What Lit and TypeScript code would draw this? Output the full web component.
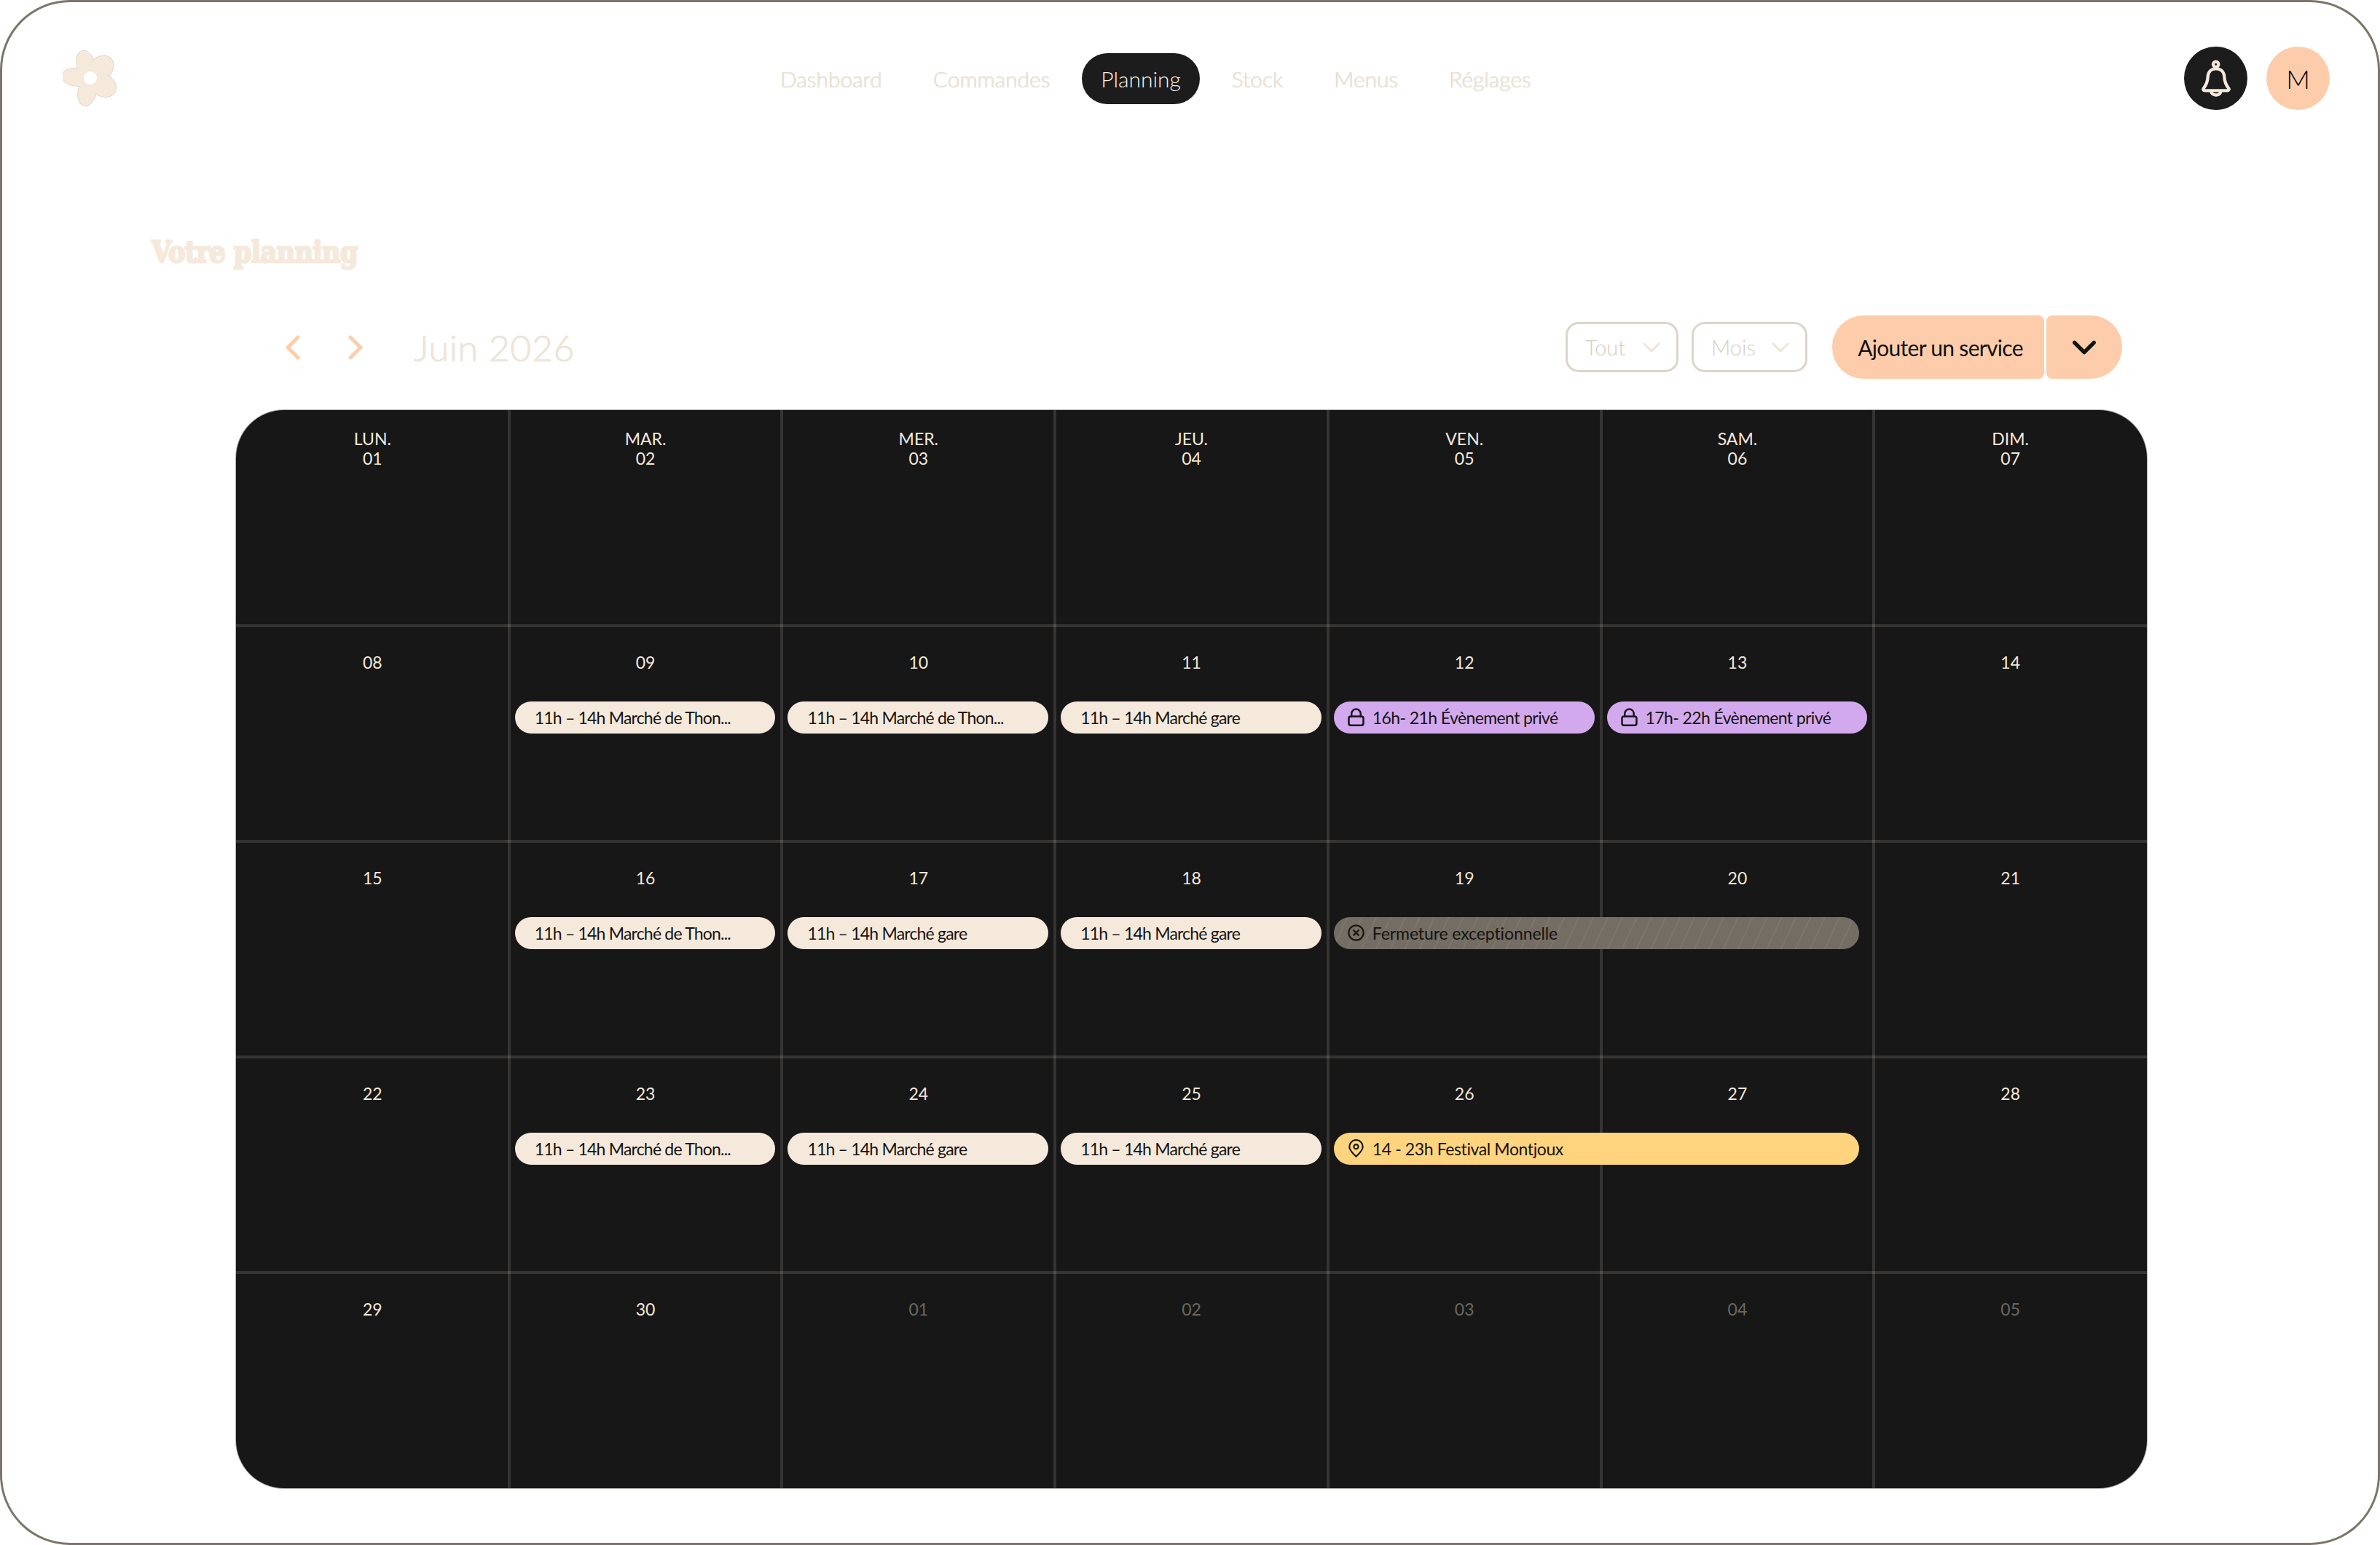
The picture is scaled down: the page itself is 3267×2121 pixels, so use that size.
import { LitElement, html, css, svg } from "lit";
import { customElement } from "lit/decorators.js";

type Ev = { t: string; k: "cream" | "purple" | "gold" | "closed"; icon?: "lock" | "x" | "pin"; span?: boolean };
type Cell = { head?: string; n: string; muted?: boolean; ev?: Ev };

const thon: Ev = { t: "11h – 14h Marché de Thon...", k: "cream" };
const gare: Ev = { t: "11h – 14h Marché gare", k: "cream" };

const cells: Cell[] = [
  { head: "LUN.", n: "01" }, { head: "MAR.", n: "02" }, { head: "MER.", n: "03" }, { head: "JEU.", n: "04" },
  { head: "VEN.", n: "05" }, { head: "SAM.", n: "06" }, { head: "DIM.", n: "07" },
  { n: "08" }, { n: "09", ev: thon }, { n: "10", ev: thon }, { n: "11", ev: gare },
  { n: "12", ev: { t: "16h- 21h Évènement privé", k: "purple", icon: "lock" } },
  { n: "13", ev: { t: "17h- 22h Évènement privé", k: "purple", icon: "lock" } }, { n: "14" },
  { n: "15" }, { n: "16", ev: thon }, { n: "17", ev: gare }, { n: "18", ev: gare },
  { n: "19", ev: { t: "Fermeture exceptionnelle", k: "closed", icon: "x", span: true } }, { n: "20" }, { n: "21" },
  { n: "22" }, { n: "23", ev: thon }, { n: "24", ev: gare }, { n: "25", ev: gare },
  { n: "26", ev: { t: "14 - 23h Festival Montjoux", k: "gold", icon: "pin", span: true } }, { n: "27" }, { n: "28" },
  { n: "29" }, { n: "30" }, { n: "01", muted: true }, { n: "02", muted: true }, { n: "03", muted: true },
  { n: "04", muted: true }, { n: "05", muted: true },
];

const navItems = ["Dashboard", "Commandes", "Planning", "Stock", "Menus", "Réglages"];

const icons = {
  lock: svg`<svg class="ico" viewBox="0 0 22 24" fill="none" stroke="#17141c" stroke-width="2.4" stroke-linejoin="round" stroke-linecap="round"><rect x="1.4" y="11" width="19.2" height="11.8" rx="2.6"/><path d="M5 11V7.4a6 6 0 0 1 12 0V11"/></svg>`,
  x: svg`<svg class="ico" viewBox="0 0 24 24" fill="none" stroke="#17150f" stroke-width="2.2" stroke-linecap="round"><circle cx="12" cy="12" r="10.6"/><path d="M8.6 8.6l6.8 6.8M15.4 8.6l-6.8 6.8" stroke-width="2.4"/></svg>`,
  pin: svg`<svg class="ico" viewBox="0 0 22 26" fill="none" stroke="#17150f" stroke-width="2.2" stroke-linejoin="round"><path d="M11 24.6C7 20.8 1.4 16 1.4 10.6a9.6 9.6 0 0 1 19.2 0C20.6 16 15 20.8 11 24.6Z"/><circle cx="11" cy="10.6" r="3.2"/></svg>`,
};

const petals = [-18, 47, 120, 193, 274];

@customElement("app-root")
export class AppRoot extends LitElement {
  static styles = css`
    :host { display: block; font-family: "Lato", "Liberation Sans", sans-serif; }
    * { box-sizing: border-box; }
    .frame {
      width: 3267px; height: 2121px; background: #fff; border: 3px solid #7c7568;
      border-radius: 96px; overflow: hidden; padding: 61px 66px 0 83px;
    }
    .header { display: flex; align-items: center; height: 87px; }
    .logo { width: 76px; height: 82px; flex: none; display: block; margin-top: 1px; }
    .nav { display: flex; gap: 18px; margin-left: 883px; align-items: center; }
    .nav-item {
      height: 70px; padding: 0 26px; border-radius: 35px; display: flex; align-items: center;
      font-size: 30px; font-weight: 300; color: #f1e5d6; letter-spacing: -0.05px;
      text-shadow: 0 0 1px rgba(130, 120, 100, 0.5);
    }
    .nav-item.active { background: #1c1c1c; color: #fbf2e7; text-shadow: none; }
    .actions { margin-left: auto; display: flex; gap: 26px; }
    .round { width: 87px; height: 87px; border-radius: 50%; display: flex; align-items: center; justify-content: center; }
    .bell { background: #1c1c1c; }
    .bell svg { width: 44px; height: 54px; display: block; }
    .avatar { background: #fdcdab; color: #000; font-size: 36px; font-weight: 300; }
    .title {
      margin: 170px 0 0 122px; font-family: "DejaVu Serif Condensed", "DejaVu Serif", serif; font-weight: 700;
      font-stretch: condensed; font-size: 41px; line-height: 50px; color: #f5e9dc; letter-spacing: -0.6px;
      -webkit-text-stroke: 2.6px #f5e9dc; transform: scaleX(0.95); transform-origin: left center; white-space: nowrap;
    }
    .toolbar { display: flex; align-items: center; height: 87px; margin: 62px 285px 0 238px; padding-left: 67px; }
    .arrow { width: 22px; height: 34px; display: block; flex: none; }
    .arrow.next { margin-left: 64px; }
    .month { margin-left: 69px; font-size: 50px; font-weight: 300; color: #f1e5d6; text-shadow: 0 0 1px rgba(130, 120, 100, 0.5); letter-spacing: 0.6px; }
    .tools { margin-left: auto; display: flex; align-items: center; }
    .select {
      height: 69px; border: 3px solid #ddd5c9; border-radius: 18px; display: flex; align-items: center;
      justify-content: space-between; padding: 0 22px 0 24px; font-size: 29px; font-weight: 300; color: #d6cec2;
    }
    .select.tout { width: 155px; margin-right: 18px; }
    .select.mois { width: 159px; margin-right: 34px; }
    .select svg { width: 24px; height: 14px; display: block; }
    .add {
      width: 291px; height: 87px; background: #fdcdab; border-radius: 43px 8px 8px 43px; color: #111; font-size: 30px;
      display: flex; align-items: center; justify-content: center; letter-spacing: -0.7px; padding-left: 6px;
    }
    .caret {
      width: 104px; height: 87px; background: #fdcdab; border-radius: 8px 43px 43px 8px; margin-left: 3px;
      display: flex; align-items: center; justify-content: center;
    }
    .caret svg { width: 32px; height: 20px; display: block; }
    .calendar {
      margin: 43px 0 0 238px; width: 2623px; height: 1480px; background: #171717; border-radius: 66px; overflow: hidden;
      display: grid; grid-template-columns: repeat(7, 1fr); grid-template-rows: repeat(5, 296px);
      box-shadow: 0 0 0 1px rgba(120, 115, 105, 0.55);
    }
    .cell { position: relative; padding-top: 37px; text-align: center; color: #f5e9dc; font-size: 23px; font-weight: 400; line-height: 27px; }
    .cell.top { padding-top: 26px; }
    .cell::before {
      content: ""; position: absolute; top: 0; bottom: 0; right: -2px; width: 4px; background: rgba(245, 233, 220, 0.14);
    }
    .cell::after {
      content: ""; position: absolute; left: 0; right: 0; bottom: -2px; height: 4px; background: rgba(245, 233, 220, 0.14);
    }
    .cell.last-col::before { display: none; }
    .cell.last-row::after { display: none; }
    .muted { color: #6b675f; }
    .label { display: block; }
    .event {
      position: absolute; z-index: 2; left: 8px; top: 104px; width: calc(100% - 17px); height: 44px; border-radius: 22px;
      display: flex; align-items: center; gap: 11px; padding: 1px 0 0 27px; color: #15130f; font-size: 23px; font-weight: 400;
      white-space: nowrap; text-align: left; line-height: 1;
    }
    .event.has-icon { padding-left: 19px; }
    .event.span { width: calc(200% - 28px); }
    .cream { background: #f5e9dc; letter-spacing: -0.8px; }
    .purple { background: #d3a9ee; letter-spacing: -0.6px; }
    .gold { background: #fed47e; letter-spacing: -0.4px; }
    .closed {
      background: repeating-linear-gradient(115deg, #736d64 0 16px, #7b756b 16px 18px); letter-spacing: -0.1px;
    }
    .ico { width: 23px; height: 25px; flex: none; display: block; margin-top: -2px; }
  `;

  private flower() {
    const ell = (stroke: boolean) => petals.map(
      (a) => svg`<ellipse cx="40" cy="20" rx="${a === 47 || a === 120 ? 16 : 13}" ry="21" transform="rotate(${a} 40 40)"
        fill="#f5e9dc" stroke="${stroke ? "#cfc9bd" : "none"}" stroke-width="${stroke ? 1.2 : 0}"/>`
    );
    return html`<svg class="logo" viewBox="0 0 80 86" aria-hidden="true">
      <g transform="translate(0 2)">${ell(true)}<circle cx="40" cy="40" r="14" fill="#f5e9dc"/>${ell(false)}
      <circle cx="40" cy="40" r="9.5" fill="#fff"/></g>
    </svg>`;
  }

  private chev(color: string, width: number) {
    return html`<svg viewBox="0 0 24 14" fill="none" stroke="${color}" stroke-width="${width}" stroke-linecap="round" stroke-linejoin="round"><path d="M2 2l10 10L22 2"/></svg>`;
  }

  render() {
    return html`
      <div class="frame">
        <header class="header">
          ${this.flower()}
          <nav class="nav">
            ${navItems.map((n) => html`<div class="nav-item ${n === "Planning" ? "active" : ""}">${n}</div>`)}
          </nav>
          <div class="actions">
            <div class="round bell">
              <svg viewBox="90 78 132 162" fill="none" stroke="#f5e9dc" stroke-width="13" stroke-linejoin="round" stroke-linecap="round">
                <circle cx="155" cy="100" r="11"/>
                <path d="M155 118c-20 0-32 14-33 34-1 22-6 32-17 46-4 5-2 10 4 10h94c6 0 8-5 4-10-11-14-16-24-17-46-1-20-13-34-35-34Z"/>
                <path d="M135 210c2 22 38 22 41 0"/>
              </svg>
            </div>
            <div class="round avatar">M</div>
          </div>
        </header>
        <h1 class="title">Votre planning</h1>
        <div class="toolbar">
          <svg class="arrow" viewBox="0 0 22 34" fill="none" stroke="#fdcdab" stroke-width="5" stroke-linecap="round" stroke-linejoin="round"><path d="M18 3L4 17l14 14"/></svg>
          <svg class="arrow next" viewBox="0 0 22 34" fill="none" stroke="#fdcdab" stroke-width="5" stroke-linecap="round" stroke-linejoin="round"><path d="M4 3l14 14L4 31"/></svg>
          <div class="month">Juin 2026</div>
          <div class="tools">
            <div class="select tout">Tout ${this.chev("#efe5d8", 3)}</div>
            <div class="select mois">Mois ${this.chev("#efe5d8", 3)}</div>
            <div class="add">Ajouter un service</div>
            <div class="caret">${this.chev("#111", 4)}</div>
          </div>
        </div>
        <section class="calendar">
          ${cells.map((c, i) => html`
            <div class="cell ${c.head ? "top" : ""} ${i % 7 === 6 ? "last-col" : ""} ${i >= 28 ? "last-row" : ""}">
              ${c.head ? html`<span class="label">${c.head}</span>` : ""}
              <span class="label ${c.muted ? "muted" : ""}">${c.n}</span>
              ${c.ev ? html`<div class="event ${c.ev.k} ${c.ev.icon ? "has-icon" : ""} ${c.ev.span ? "span" : ""}">
                ${c.ev.icon ? icons[c.ev.icon] : ""}<span>${c.ev.t}</span></div>` : ""}
            </div>`)}
        </section>
      </div>
    `;
  }
}
